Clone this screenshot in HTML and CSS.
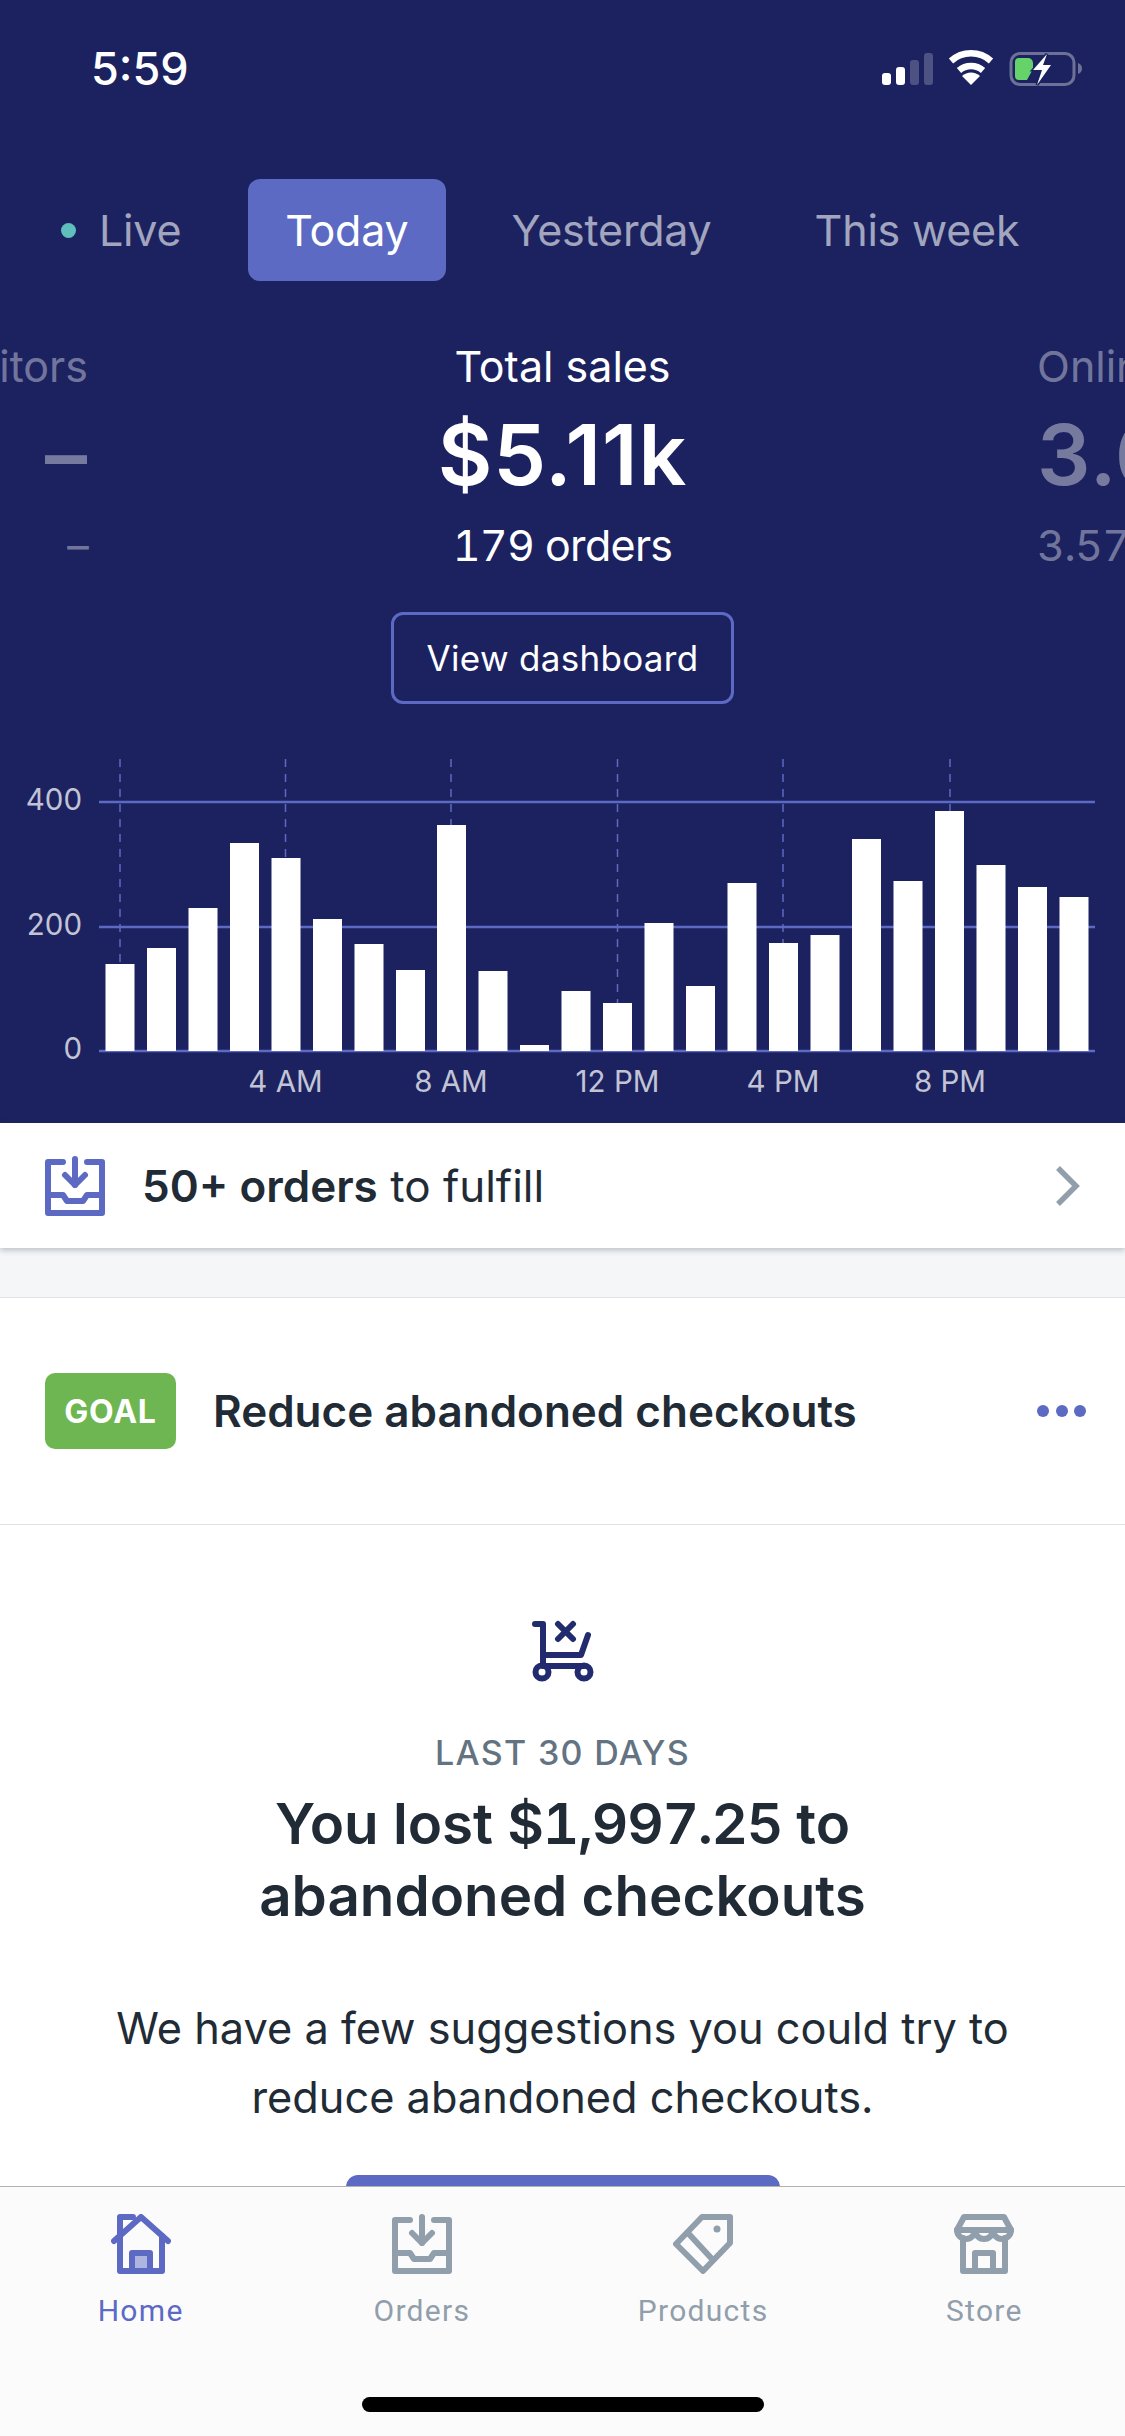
FILE: index.html
```html
<!DOCTYPE html>
<html lang="en">
<head>
<meta charset="utf-8">
<title>Home</title>
<link rel="stylesheet" href="styles.css">
</head>
<body>
<div class="app">
  <main class="scroll">
    <section class="hero">
      <header class="status">
        <span class="time">5:59</span>
        <svg class="status-icons" viewBox="0 0 260 70" width="260" height="70">
          <rect class="s-on" x="42" y="43" width="9" height="12" rx="3"/>
          <rect class="s-on" x="56" y="37" width="9" height="18" rx="3"/>
          <rect class="s-off" x="70" y="30" width="9" height="25" rx="3"/>
          <rect class="s-off" x="84" y="23" width="9" height="32" rx="3"/>
          <path class="wifi" d="M111 31a30 30 0 0 1 40 0"/>
          <path class="wifi" d="M119 40.500a18 18 0 0 1 24 0"/>
          <path class="s-on" d="M131 55l-9-9a13 13 0 0 1 18 0z"/>
          <rect class="batt" x="171" y="23.500" width="63" height="31" rx="9"/>
          <path class="batt-nub" d="M238 33c3 1 4 3 4 5.500s-1 4.500-4 5.500z"/>
          <path class="batt-fill" d="M179 28h9a5 5 0 0 1 5 5v6l-6 11h-8a4 4 0 0 1-4-4V32a4 4 0 0 1 4-4z"/>
          <path class="bolt" d="M207 24l-14 16h9l-5 15 14-20h-8z"/>
        </svg>
      </header>

      <nav class="tabs">
        <span class="tab tab-live"><i class="dot"></i>Live</span>
        <span class="tab tab-on">Today</span>
        <span class="tab">Yesterday</span>
        <span class="tab">This week</span>
      </nav>

      <div class="stats">
        <div class="stat stat-left">
          <div class="stat-label">Visitors</div>
          <div class="stat-value">–</div>
          <div class="stat-sub">–</div>
        </div>
        <div class="stat stat-main">
          <div class="stat-label">Total sales</div>
          <div class="stat-value">$5.11k</div>
          <div class="stat-sub">179 orders</div>
          <div class="dash-btn">View dashboard</div>
        </div>
        <div class="stat stat-right">
          <div class="stat-label">Online store</div>
          <div class="stat-value">3.6%</div>
          <div class="stat-sub">3.57%</div>
        </div>
      </div>

      <svg class="chart" viewBox="0 0 1125 373" width="1125" height="373">
        <g class="vlines">
          <path d="M120 9V301"/><path d="M285.500 9V301"/><path d="M451 9V301"/>
          <path d="M617.500 9V301"/><path d="M783 9V301"/><path d="M950 9V301"/>
        </g>
        <g class="hlines">
          <path d="M99 52H1095"/><path d="M99 177H1095"/><path d="M99 301H1095"/>
        </g>
        <g class="bars">
          <rect x="105.500" y="214" width="29" height="87"/>
          <rect x="147" y="198" width="29" height="103"/>
          <rect x="188.500" y="158" width="29" height="143"/>
          <rect x="230" y="93" width="29" height="208"/>
          <rect x="271.500" y="108" width="29" height="193"/>
          <rect x="313" y="169" width="29" height="132"/>
          <rect x="354.500" y="194" width="29" height="107"/>
          <rect x="396" y="220" width="29" height="81"/>
          <rect x="437" y="75" width="29" height="226"/>
          <rect x="478.500" y="221" width="29" height="80"/>
          <rect x="520" y="295" width="29" height="6"/>
          <rect x="561.500" y="241" width="29" height="60"/>
          <rect x="603" y="253" width="29" height="48"/>
          <rect x="644.500" y="173" width="29" height="128"/>
          <rect x="686" y="236" width="29" height="65"/>
          <rect x="727.500" y="133" width="29" height="168"/>
          <rect x="769" y="193" width="29" height="108"/>
          <rect x="810.500" y="185" width="29" height="116"/>
          <rect x="852" y="89" width="29" height="212"/>
          <rect x="893.500" y="131" width="29" height="170"/>
          <rect x="935" y="61" width="29" height="240"/>
          <rect x="976.500" y="115" width="29" height="186"/>
          <rect x="1018" y="137" width="29" height="164"/>
          <rect x="1059.500" y="147" width="29" height="154"/>
        </g>
        <g class="axis">
          <text x="82" y="60" text-anchor="end">400</text>
          <text x="82" y="185" text-anchor="end">200</text>
          <text x="82" y="309" text-anchor="end">0</text>
          <text x="285.500" y="342" text-anchor="middle">4 AM</text>
          <text x="451" y="342" text-anchor="middle">8 AM</text>
          <text x="617.500" y="342" text-anchor="middle">12 PM</text>
          <text x="783" y="342" text-anchor="middle">4 PM</text>
          <text x="950" y="342" text-anchor="middle">8 PM</text>
        </g>
      </svg>
    </section>

    <section class="fulfill">
      <svg class="icon ic-brand" viewBox="0 0 60 60" width="60" height="60">
        <path d="M18 6H3V57H57V6H42"/><path d="M30 3V29"/><path d="M20 19L30 29L40 19"/>
        <path d="M3 39H18L22 45H38L42 39H57"/>
      </svg>
      <div class="fulfill-text"><strong>50+ orders</strong> to fulfill</div>
      <svg class="chev" viewBox="0 0 25 40" width="25" height="40"><path d="M3 2L21 20L3 38"/></svg>
    </section>

    <div class="spacer"></div>

    <section class="goal">
      <span class="badge">GOAL</span>
      <div class="goal-title">Reduce abandoned checkouts</div>
      <div class="more"><i></i><i></i><i></i></div>
    </section>

    <section class="card">
      <svg class="icon ic-navy" viewBox="0 0 62 62" width="62" height="62">
        <path d="M3 4H11V46H52"/><path d="M11 35H49L56 15"/>
        <circle cx="10" cy="52" r="6.500"/><circle cx="52" cy="52" r="6.500"/>
        <path d="M26 4L41 19"/><path d="M41 4L26 19"/>
      </svg>
      <div class="eyebrow">LAST 30 DAYS</div>
      <h1 class="headline">You lost <span class="amount">$1,997.25</span> to<br>abandoned checkouts</h1>
      <p class="copy">We have a few suggestions you could try to<br>reduce abandoned checkouts.</p>
      <div class="cta"></div>
    </section>
  </main>

  <footer class="tabbar">
    <div class="tabbar-row">
      <div class="tb tb-on">
        <svg class="icon" viewBox="0 0 60 60" width="60" height="60">
          <rect class="home-door" x="24" y="42" width="12" height="12"/>
          <path d="M3 27L30 3L57 27"/><path d="M9 22V57H51V22"/><path d="M9 22V3H22"/>
          <path d="M21 57V39H39V57"/>
        </svg>
        <span>Home</span>
      </div>
      <div class="tb">
        <svg class="icon" viewBox="0 0 60 60" width="60" height="60">
          <path d="M18 6H3V57H57V6H42"/><path d="M30 3V29"/><path d="M20 19L30 29L40 19"/>
          <path d="M3 39H18L22 45H38L42 39H57"/>
        </svg>
        <span>Orders</span>
      </div>
      <div class="tb">
        <svg class="icon" viewBox="0 0 60 60" width="60" height="60">
          <path d="M57 3H29L3 30L30 57L57 29Z"/><path d="M15 19L39 45"/>
          <circle class="tag-dot" cx="44" cy="15" r="3.500"/>
        </svg>
        <span>Products</span>
      </div>
      <div class="tb">
        <svg class="icon" viewBox="0 0 60 60" width="60" height="60">
          <path d="M3 16L10 3H50L57 16"/><path d="M3 16H57"/>
          <path d="M3 16a9 9 0 0 0 18 0a9 9 0 0 0 18 0a9 9 0 0 0 18 0"/>
          <path d="M9 24V57H51V24"/><path d="M21 57V39H39V57"/>
        </svg>
        <span>Store</span>
      </div>
    </div>
    <div class="home-bar"></div>
  </footer>
</div>
</body>
</html>
```

FILE: styles.css
```css
* { box-sizing: border-box; }
html, body { margin: 0; padding: 0; }
body { font-family: Inter, "Noto Sans", sans-serif; background: #fff; color: #212b36; }

.app { width: 1125px; height: 2436px; display: flex; flex-direction: column; overflow: hidden; }
.scroll { flex: 1; min-height: 0; overflow: hidden; }

/* hero */
.hero { height: 1123px; background: #1c2260; color: #fff; overflow: hidden; }
.status { height: 100px; padding: 30px 25px 0 91px; display: flex; justify-content: space-between; align-items: flex-start; }
.time { font-size: 45px; font-weight: 500; line-height: 54px; margin-top: 12px; }
.status-icons { display: block; }
.s-on { fill: #fff; }
.s-off { fill: #4d5282; }
.wifi { fill: none; stroke: #fff; stroke-width: 6.500; }
.batt { fill: none; stroke: #6d7197; stroke-width: 3; }
.batt-nub { fill: #6d7197; }
.batt-fill { fill: #65d26a; }
.bolt { fill: #fff; stroke: #1c2260; stroke-width: 3; paint-order: stroke; }

.tabs { margin-top: 79px; height: 102px; padding-left: 61px; display: flex; }
.tab { padding: 0 37px; margin-right: 29px; display: flex; align-items: center; font-size: 43px; letter-spacing: -.2px; color: rgba(255,255,255,.6); border-radius: 12px; white-space: nowrap; }
.tab-live { padding-left: 0; margin-right: 30px; }
.dot { width: 15px; height: 15px; border-radius: 50%; background: #5fbfbc; margin-right: 23px; }
.tab-on { background: #5c6ac4; color: #fff; }

.stats { margin-top: 60px; display: grid; grid-template-columns: 88px 1fr 88px; white-space: nowrap; }
.stat { display: flex; flex-direction: column; min-width: 0; }
.stat-left { align-items: flex-end; color: rgba(255,255,255,.4); }
.stat-right { align-items: flex-start; color: rgba(255,255,255,.4); }
.stat-main { align-items: center; }
.stat-label { font-size: 43px; line-height: 50px; }
.stat-value { font-size: 84px; font-weight: 600; line-height: 100px; margin-top: 14px; letter-spacing: 1px; }
.stat-sub { font-size: 43px; line-height: 50px; margin-top: 15px; font-feature-settings: "tnum"; letter-spacing: -.7px; }
.dash-btn { margin-top: 42px; width: 343px; height: 92px; border: 3px solid #5c6ac4; border-radius: 12px; display: flex; align-items: center; justify-content: center; font-size: 35px; letter-spacing: .3px; }

.chart { display: block; margin-top: 46px; }
.vlines path { stroke: #5c6ac4; stroke-width: 1.500; stroke-dasharray: 8 7; fill: none; }
.hlines path { stroke: #5c6ac4; stroke-width: 2.500; fill: none; }
.bars rect { fill: #fff; }
.axis text { font-family: Inter, sans-serif; font-size: 29.500px; fill: #c2c4d6; }

/* rows */
.icon { display: block; fill: none; stroke: currentColor; stroke-width: 6; stroke-linecap: round; stroke-linejoin: round; flex: none; }
.ic-brand { color: #5c6ac4; }
.ic-navy { color: #212b6e; }

.fulfill { position: relative; height: 125px; padding: 0 45px; display: flex; align-items: center; background: #fff; box-shadow: 0 2px 6px rgba(66,79,96,.35); }
.fulfill-text { font-size: 44px; margin-left: 37px; flex: 1; color: #212b36; }
.fulfill-text strong { font-weight: 600; }
.chev { fill: none; stroke: #919eab; stroke-width: 5.500; display: block; }

.spacer { height: 49px; background: #f4f6f8; }

.goal { height: 228px; padding: 0 39px 0 45px; display: flex; align-items: center; border-top: 1px solid #dfe3e8; border-bottom: 1px solid #dfe3e8; }
.badge { width: 131px; height: 76px; border-radius: 10px; background: #6db651; color: #fff; font-size: 32px; font-weight: 700; letter-spacing: .8px; display: flex; align-items: center; justify-content: center; flex: none; }
.goal-title { font-size: 44px; font-weight: 600; margin-left: 37px; flex: 1; white-space: nowrap; }
.more { display: flex; gap: 6.500px; }
.more i { width: 12px; height: 12px; border-radius: 50%; background: #5c6ac4; display: block; }

.card { padding-top: 95px; display: flex; flex-direction: column; align-items: center; text-align: center; }
.eyebrow { margin-top: 49px; font-size: 34px; font-weight: 500; line-height: 44px; color: #637381; letter-spacing: 1.300px; }
.headline { margin: 13px 0 0; font-size: 56.500px; font-weight: 600; line-height: 72px; }
.amount { font-feature-settings: "tnum"; letter-spacing: -1.300px; }
.copy { margin: 62px 0 0; font-size: 43.300px; line-height: 69px; }
.cta { margin-top: 43px; width: 434px; height: 92px; border-radius: 12px; background: #5c6ac4; flex: none; }

/* tab bar */
.tabbar { height: 250px; flex: none; background: #fbfbfb; border-top: 1px solid #b2b2b2; padding-top: 27px; display: flex; flex-direction: column; align-items: center; }
.tabbar-row { width: 100%; display: flex; }
.tb { flex: 1; display: flex; flex-direction: column; align-items: center; color: #919eab; }
.tb span { margin-top: 19px; font-family: Roboto, sans-serif; font-size: 30px; line-height: 36px; letter-spacing: 1.300px; }
.tb-on { color: #5c6ac4; }
.home-door { fill: #aeb4e0; stroke: none; }
.tag-dot { fill: currentColor; stroke: none; }
.home-bar { margin-top: 68px; width: 402px; height: 15px; border-radius: 8px; background: #000; }
```
